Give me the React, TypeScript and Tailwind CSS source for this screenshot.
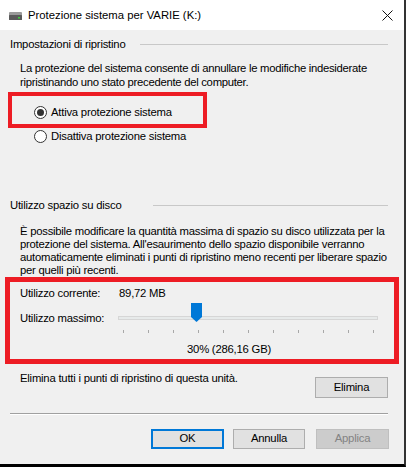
import React from "react";

const GroupHeader = ({ label, lineW }: { label: string; lineW: string }) => (
  <div className="flex items-center justify-between h-4 ml-[10px] mr-[16px]">
    <span className="leading-4">{label}</span>
    <div className={`${lineW} h-px bg-[#c8c8c8] mt-px`} />
  </div>
);

const Radio = ({ checked }: { checked?: boolean }) => (
  <span className="w-[13px] h-[13px] rounded-full border border-[#333333] bg-white flex items-center justify-center shrink-0">
    {checked && <span className="w-[7px] h-[7px] rounded-full bg-[#333333]" />}
  </span>
);

const Btn = ({
  label,
  kind = "normal",
  className = "",
}: {
  label: string;
  kind?: "normal" | "default" | "disabled";
  className?: string;
}) => {
  const styles =
    kind === "default"
      ? "border-2 border-[#0078d7] bg-[#e1e1e1] text-black"
      : kind === "disabled"
      ? "border border-[#bfbfbf] bg-[#cccccc] text-[#838383]"
      : "border border-[#adadad] bg-[#e1e1e1] text-black";
  return (
    <div className={`h-[20px] flex items-center justify-center leading-none ${styles} ${className}`}>
      {label}
    </div>
  );
};

const ticks = Array.from({ length: 11 }, (_, i) => i);

export default function App() {
  return (
    <div className="w-[406px] h-[467px] flex flex-col bg-[#f0f0f0] border-r-2 border-r-[#333333] border-b-[3px] border-b-black text-[11.3px] text-black font-['Segoe_UI','Liberation_Sans',Arial,sans-serif] overflow-hidden">
      {/* title bar */}
      <div className="h-[30px] bg-white flex items-center pl-[9px] pr-[11px] shrink-0">
        <svg width="13" height="8" viewBox="0 0 13 8" className="mt-px">
          <rect x="0" y="0" width="13" height="4" rx="1" fill="#9a9a9a" />
          <rect x="0" y="3" width="13" height="5" rx="0.5" fill="#5a5a5a" />
          <rect x="9" y="5" width="2" height="1.5" fill="#3cd13c" />
        </svg>
        <span className="ml-[6px] leading-4">Protezione sistema per VARIE (K:)</span>
        <svg width="11" height="11" viewBox="0 0 11 11" className="ml-auto">
          <path d="M0.5 0.5 L10.5 10.5 M10.5 0.5 L0.5 10.5" stroke="#111" strokeWidth="1" />
        </svg>
      </div>

      {/* body */}
      <div className="flex flex-col tracking-[-0.22px]">
        <div className="mt-[6px]">
          <GroupHeader label="Impostazioni di ripristino" lineW="w-[248px]" />
        </div>
        <p className="mt-[9px] ml-[20px] leading-[14px] whitespace-nowrap tracking-[-0.28px]">
          La protezione del sistema consente di annullare le modifiche indesiderate
          <br />
          ripristinando uno stato precedente del computer.
        </p>

        <div className="mt-[3px] ml-[8px] w-[199px] h-[36px] border-4 border-[#ed1c24] flex items-center pt-[4px] pl-[22px] gap-[4px]">
          <Radio checked />
          <span className="leading-4">Attiva protezione sistema</span>
        </div>
        <div className="h-4 flex items-center pl-[34px] gap-[4px]">
          <Radio />
          <span className="leading-4">Disattiva protezione sistema</span>
        </div>

        <div className="mt-[53px]">
          <GroupHeader label="Utilizzo spazio su disco" lineW="w-[235px]" />
        </div>
        <p className="mt-[12px] ml-[20px] leading-[13px] whitespace-nowrap tracking-[-0.25px]">
          È possibile modificare la quantità massima di spazio su disco utilizzata per la
          <br />
          protezione del sistema. All'esaurimento dello spazio disponibile verranno
          <br />
          automaticamente eliminati i punti di ripristino meno recenti per liberare spazio
          <br />
          per quelli più recenti.
        </p>

        <div className="ml-[5px] w-[394px] h-[87px] border-[5px] border-[#ed1c24] flex flex-col pl-[10px]">
          <div className="mt-[3px] h-4 flex items-center">
            <span className="w-[99px] leading-4">Utilizzo corrente:</span>
            <span className="leading-4">89,72 MB</span>
          </div>
          <div className="mt-[9px] h-4 flex items-center">
            <span className="w-[98px] leading-4">Utilizzo massimo:</span>
            <div className="relative w-[260px] h-4 flex items-center">
              <div className="w-full h-[4px] bg-[#e7eaea] border border-[#d6d6d6]" />
              <svg
                width="11"
                height="19"
                viewBox="0 0 11 19"
                className="absolute left-[73px] top-[-7px]"
              >
                <path d="M0 0 H11 V14 L5.5 19 L0 14 Z" fill="#0078d7" />
              </svg>
            </div>
          </div>
          <div className="mt-[4px] ml-[103px] w-[251px] h-[3px] flex justify-between">
            {ticks.map((t) => (
              <span key={t} className="w-px h-[3px] bg-[#a8a8a8]" />
            ))}
          </div>
          <div className="mt-[8px] h-4 ml-[167px] leading-4">30% (286,16 GB)</div>
        </div>

        <div className="flex justify-between items-start ml-[20px] mr-[16px]">
          <span className="mt-[6px] leading-4">Elimina tutti i punti di ripristino di questa unità.</span>
          <Btn label="Elimina" className="mt-[13px] w-[73px] h-[21px]" />
        </div>

        <div className="mt-[15px] ml-[10px] mr-[16px] border-t border-t-[#a0a0a0] border-b border-b-white" />

        <div className="mt-[14px] flex justify-end mr-[15px]">
          <Btn label="OK" kind="default" className="w-[73px]" />
          <Btn label="Annulla" className="ml-[9px] w-[72px]" />
          <Btn label="Applica" kind="disabled" className="ml-[11px] w-[73px]" />
        </div>
      </div>
    </div>
  );
}
